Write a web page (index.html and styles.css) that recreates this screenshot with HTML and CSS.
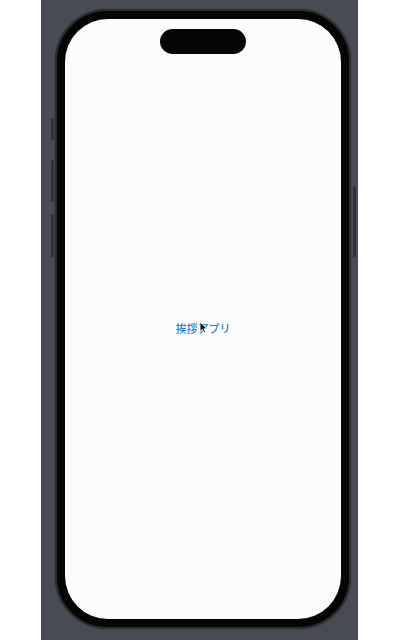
FILE: index.html
```html
<!DOCTYPE html>
<html lang="ja">
<head>
<meta charset="utf-8">
<title>挨拶アプリ</title>
<link rel="stylesheet" href="styles.css">
</head>
<body>
<div class="stage">
  <div class="phone">
    <span class="btn btn-action"></span>
    <span class="btn btn-vol-up"></span>
    <span class="btn btn-vol-down"></span>
    <span class="btn btn-power"></span>
    <div class="screen">
      <div class="island"></div>
      <div class="content">
        <div class="label-wrap">
          <span class="label">挨拶アプリ</span>
          <svg class="cursor" width="9" height="13" viewBox="0 0 9 13" aria-hidden="true">
            <path d="M1 0.8 L1 10.6 L3.4 8.4 L5 12 L6.6 11.3 L5.1 7.8 L8.2 7.8 Z" fill="#111" stroke="#fff" stroke-width="0.9" stroke-linejoin="round"/>
          </svg>
        </div>
      </div>
    </div>
  </div>
</div>
</body>
</html>
```
FILE: styles.css
```css
html, body {
  margin: 0;
  padding: 0;
  background: #ffffff;
}
body {
  width: 400px;
  height: 640px;
  overflow: hidden;
  font-family: "Noto Sans CJK JP", "Noto Sans", sans-serif;
}
.stage {
  margin-left: 41px;
  width: 317px;
  height: 640px;
  background: #474b53;
  padding: 9px 0 0 14px;
  box-sizing: border-box;
}
.phone {
  position: relative;
  width: 296px;
  height: 620px;
  box-sizing: border-box;
  border-radius: 52px;
  background: #050505;
  border: 2px solid #2c2d30;
  padding: 8px;
  box-shadow: 0 0 1px rgba(0,0,0,0.6);
}
.btn {
  position: absolute;
  width: 3px;
  background: #2e3136;
  border-radius: 1px;
}
.btn-action { left: -6px; top: 107px; height: 22px; }
.btn-vol-up { left: -6px; top: 149px; height: 42px; }
.btn-vol-down { left: -6px; top: 203px; height: 43px; }
.btn-power { right: -7px; top: 176px; height: 70px; }
.screen {
  width: 100%;
  height: 100%;
  background: #fcfcfc;
  border-radius: 43px;
  display: flex;
  flex-direction: column;
  align-items: center;
  overflow: hidden;
}
.island {
  margin-top: 10px;
  width: 86px;
  height: 25px;
  border-radius: 13px;
  background: #050505;
  flex: none;
}
.content {
  flex: 1;
  display: flex;
  align-items: center;
  justify-content: center;
  padding-bottom: 21px;
}
.label-wrap {
  position: relative;
}
.label {
  font-size: 11px;
  line-height: 14px;
  font-weight: 500;
  color: #2a7bea;
  letter-spacing: 0;
}
.cursor {
  position: absolute;
  left: 23px;
  top: 7px;
}
```
